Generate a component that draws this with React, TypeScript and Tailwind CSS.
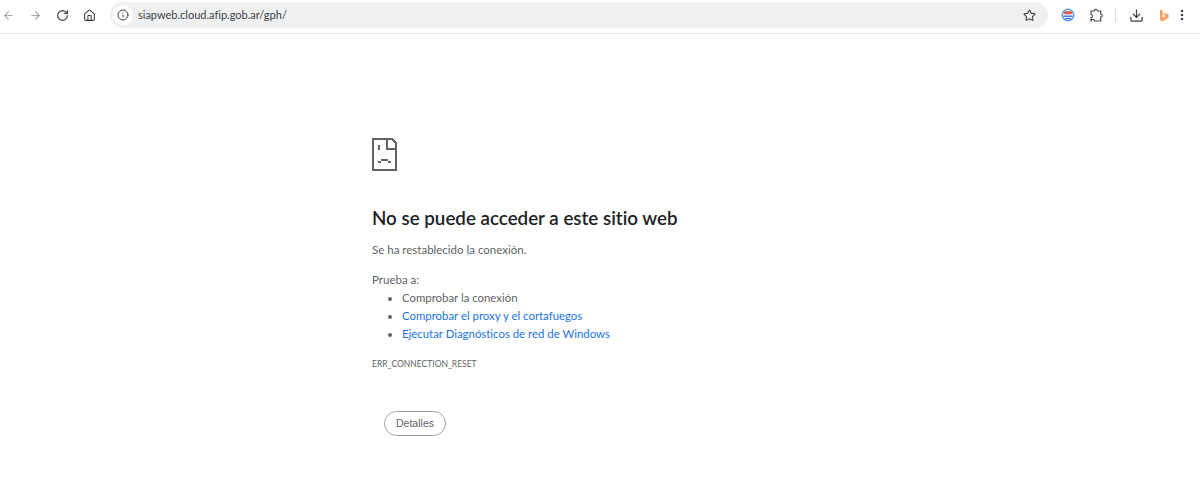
import { ArrowLeft, ArrowRight, Download, EllipsisVertical, House, Info, RotateCw, Star } from "lucide-react";

function SadPage() {
  return (
    <svg width="25" height="33" viewBox="0 0 25 33" shapeRendering="crispEdges" fill="#5f6368">
      <path d="M0 0h20v2H2v29h21V6h2v27H0z" />
      <path d="M14 0h2v10h9v2H14z" />
      <path d="M20 0h1v1h1v1h1v1h1v1h1v2h-2V5h-1V4h-1V3h-1V2h-1z" />
      <path d="M6 7h2v5H6z" />
      <path d="M9 21h7v2H9zM6 23h3v2H6zM16 23h3v2h-3z" />
    </svg>
  );
}

function Extension() {
  return (
    <svg width="14" height="14" viewBox="0 0 14 14">
      <circle cx="7" cy="7" r="6.5" fill="#5a9ee8" />
      <circle cx="7" cy="7" r="4.9" fill="#f4f6fb" />
      <rect x="3" y="3.2" width="8" height="3" rx="1" fill="#e0584e" />
      <rect x="2.5" y="7.5" width="9" height="1.4" fill="#3b6fd4" />
      <rect x="4" y="10" width="6" height="1.2" fill="#3b6fd4" />
    </svg>
  );
}

function Puzzle() {
  return (
    <svg width="14" height="14" viewBox="0 0 14 14" fill="none" stroke="#4a4d51" strokeWidth="1.2">
      <path d="M1 3h3.2a1.6 1.6 0 0 1 3.2 0h3.3v3a1.5 1.5 0 0 1 0 3v4H4.5a1.6 1.6 0 0 0-3.2-.2H1V9.5a1.5 1.5 0 0 0 0-3z" />
    </svg>
  );
}

function Bing() {
  return (
    <svg width="10" height="13" viewBox="0 0 10 13">
      <path d="M1 0.5l2.6 1v7l3-1.6-1.5-.8-.9-2.3 5.3 1.8v3L3.6 12.5 1 11z" fill="#f7a061" />
    </svg>
  );
}

export default function App() {
  return (
    <div className="h-[477px] w-[1200px] overflow-hidden bg-white font-['Lato','Open_Sans',sans-serif] [font-variant-ligatures:none]">
      <header className="flex h-[34px] items-start border-b border-[#e6e6e6] bg-white">
        <div className="flex h-[30px] items-center pl-[2px] text-[#3c4043]">
          <ArrowLeft size={13} className="text-[#a6a8ab]" />
          <ArrowRight size={13} className="ml-[14px] text-[#a6a8ab]" />
          <RotateCw size={13} strokeWidth={2.2} className="ml-[14px]" />
          <House size={13} className="ml-[14px]" />
        </div>
        <div className="ml-[14px] mt-[2px] flex h-[26px] w-[938px] items-center rounded-full bg-[#eff0f1] pl-[3px] pr-[11px]">
          <div className="flex h-[20px] w-[20px] items-center justify-center rounded-full bg-white">
            <Info size={12} className="text-[#3c4043]" />
          </div>
          <span className="ml-[5px] text-[11px] text-[#3c4043]">siapweb.cloud.afip.gob.ar/gph/</span>
          <Star size={13} strokeWidth={2} className="ml-auto -translate-x-px text-[#3c4043]" />
        </div>
        <div className="flex h-[30px] items-center">
          <div className="ml-[13px]"><Extension /></div>
          <div className="ml-[15px]"><Puzzle /></div>
          <div className="ml-[11px] h-[13px] w-px bg-[#dadce0]" />
          <Download size={15} strokeWidth={2} className="ml-[13px] text-[#3c4043]" />
          <div className="ml-[15px]"><Bing /></div>
          <EllipsisVertical size={14} strokeWidth={2.4} className="ml-[6px] text-[#3c4043]" />
        </div>
      </header>
      <main className="ml-[372px] w-[460px] pt-[104px]">
        <SadPage />
        <h1 className="mt-[34px] text-[18.75px] font-semibold leading-[26px] text-[#202124]">
          No se puede acceder a este sitio web
        </h1>
        <p className="mt-[10px] text-[11.5px] leading-[18px] text-[#5f6368]">Se ha restablecido la conexión.</p>
        <p className="mt-[12px] text-[11.5px] leading-[18px] text-[#5f6368]">Prueba a:</p>
        <ul className="list-disc pl-[30px] text-[11.4px] leading-[18px] text-[#5f6368]">
          <li>Comprobar la conexión</li>
          <li><a className="text-[#1a73e8]">Comprobar el proxy y el cortafuegos</a></li>
          <li><a className="text-[#1a73e8]">Ejecutar Diagnósticos de red de Windows</a></li>
        </ul>
        <p className="mt-[14px] text-[8.5px] leading-[14px] text-[#5f6368]">ERR_CONNECTION_RESET</p>
        <button className="ml-[12px] mt-[40px] flex h-[25px] w-[62px] items-center justify-center rounded-full border border-[#a0a3a7] bg-white font-['Liberation_Sans',sans-serif] text-[10.5px] text-[#5f6368]">
          Detalles
        </button>
      </main>
    </div>
  );
}
